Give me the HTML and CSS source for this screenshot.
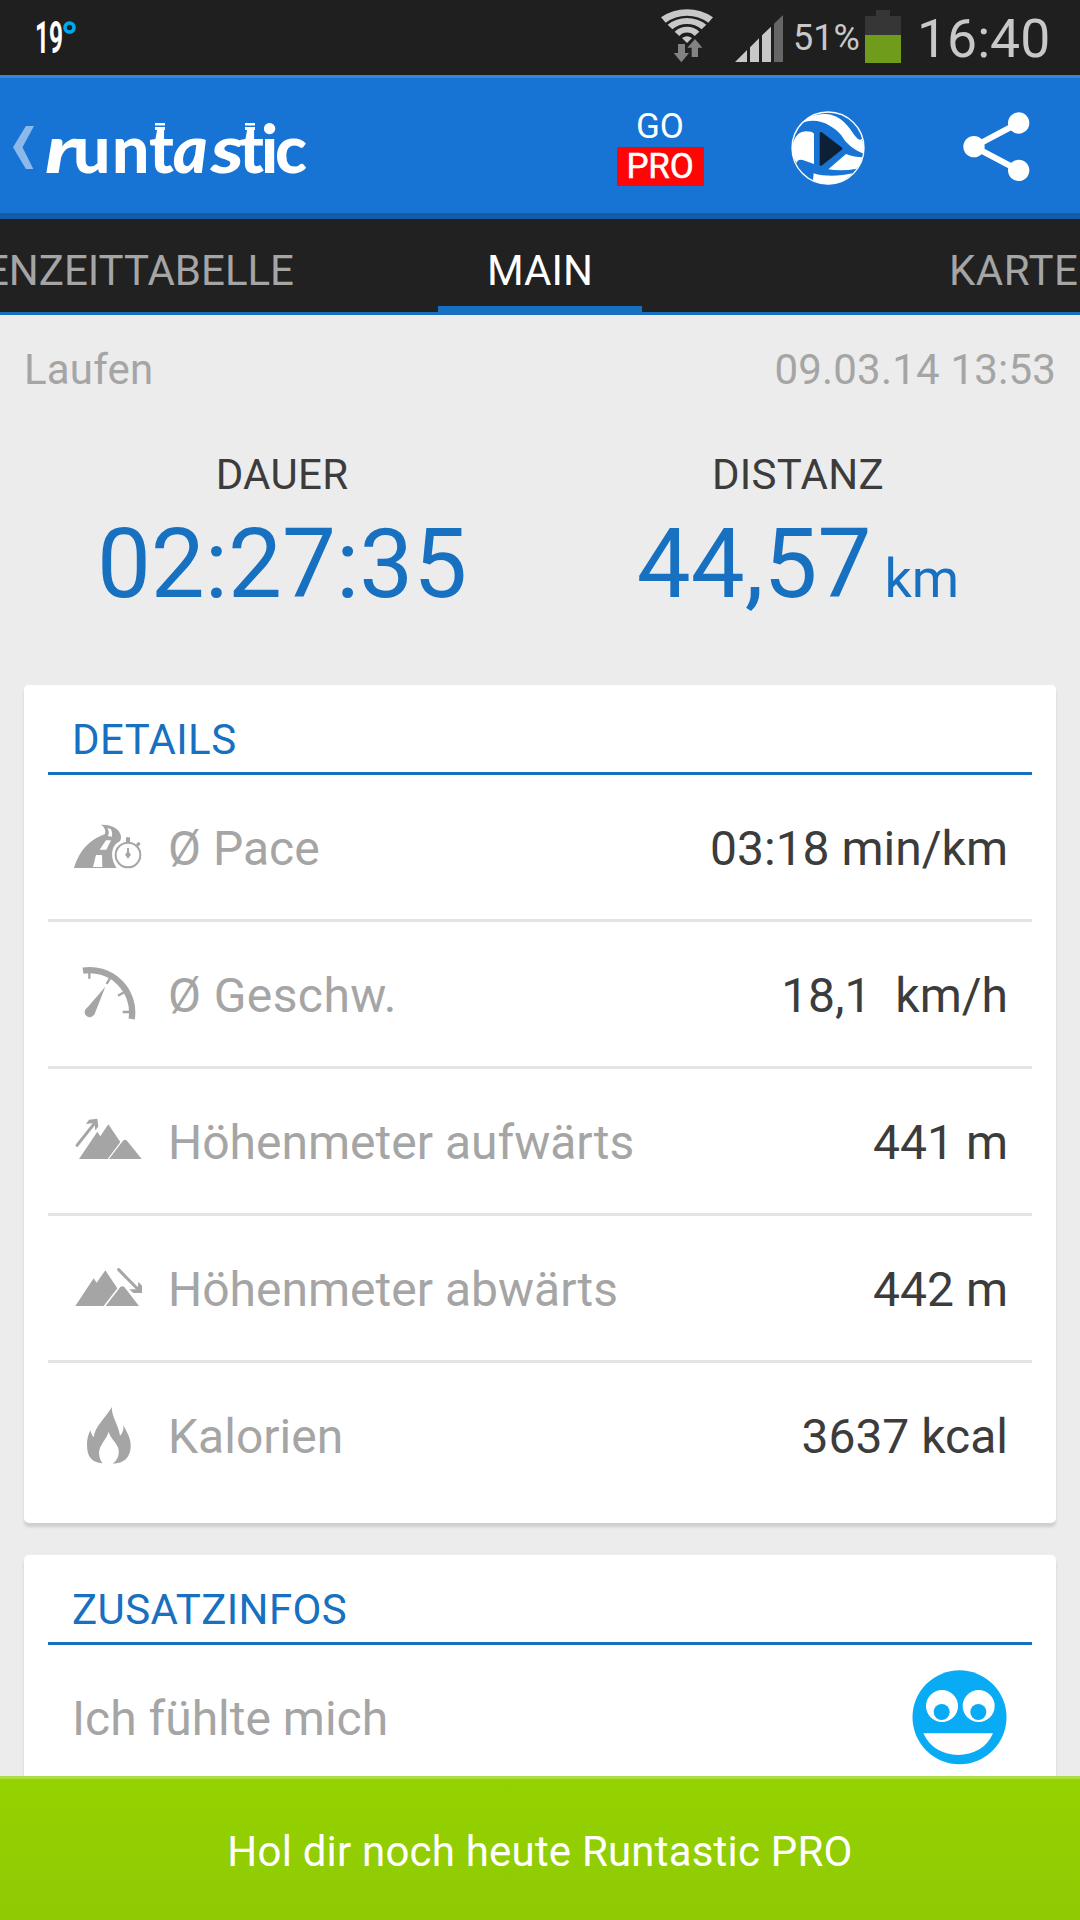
FILE: index.html
```html
<!DOCTYPE html>
<html lang="de">
<head>
  <title>runtastic</title>
  <meta charset="UTF-8">
  <link rel="stylesheet" href="styles.css">
</head>
<body>
  <div class="screen">

    <!-- Statusleiste -->
    <div class="status-bar">
      <svg class="temperature" viewBox="0 0 60 75">
        <text x="0" y="53" textLength="28" lengthAdjust="spacingAndGlyphs">19</text>
        <circle cx="34.5" cy="27.5" r="4.5"/>
      </svg>
      <div class="status-icons">
        <svg class="wifi" viewBox="183 27 156 162">
          <g fill="#c8c8c8">
            <path d="M183 52A139 139 0 0 1 339 52L325 68A108 108 0 0 0 197 68Z"/>
            <path d="M203 74A94 94 0 0 1 319 74L305 88A68 68 0 0 0 217 88Z"/>
            <path d="M224 95A53 53 0 0 1 298 95L284 108A31 31 0 0 0 238 108Z"/>
            <path d="M246 114Q261 103 276 114L261 129Z"/>
          </g>
          <g fill="#828282">
            <path d="M234 132H255V159H267L244 187L221 159H234Z"/>
            <path d="M275 171H294V143H307L285 117L262 143H275Z"/>
          </g>
        </svg>
        <svg class="signal" viewBox="405 45 144 144">
          <path fill="#c8c8c8" d="M405 186L441 150V186ZM450 186V142L477 115V186ZM486 186V106L513 80V186Z"/>
          <path fill="#666" d="M522 186V71L549 45V186Z"/>
        </svg>
        <span class="battery-text">51%</span>
        <svg class="battery" viewBox="0 0 36 53">
          <path fill="#363636" d="M11 0H25V6H36V25H0V6H11Z"/>
          <rect fill="#6f9c1a" y="25" width="36" height="28"/>
        </svg>
        <span class="clock">16:40</span>
      </div>
    </div>

    <!-- Kopfzeile -->
    <div class="action-bar">
      <svg class="back" viewBox="38 377 62 127">
        <path d="M76 377H100L66 440L98 504H76L38 440Z"/>
      </svg>
      <svg class="logo" viewBox="0 0 270 100">
        <text y="73"><tspan class="slanted" x="0" textLength="32" lengthAdjust="spacingAndGlyphs">r</tspan><tspan x="28 67 104">unt</tspan><tspan class="slanted" x="128">a</tspan><tspan class="slanted" x="166" textLength="33" lengthAdjust="spacingAndGlyphs">s</tspan><tspan x="194 216 230">tic</tspan></text>
        <path d="M110 23H120V25.500H110ZM110 27H120V30H110ZM200 23H210V25.500H200ZM200 27H210V30H200Z"/>
      </svg>
      <div class="actions">
        <div class="action go-pro">
          <span class="go">GO</span>
          <span class="pro">PRO</span>
        </div>
        <div class="action">
          <svg class="globe" viewBox="571 332 222 222">
            <circle cx="682" cy="443" r="108" fill="none" stroke="#fff" stroke-width="4"/>
            <g fill="#fff">
              <path d="M574 442C577 420 588 393 616 393Q634 393 640 400V491L606 479Q590 475 588 489Q574 468 574 442Z"/>
              <path d="M594 378C615 350 645 340 675 341C722 344 745 380 764 408Q776 424 784 415Q792 438 790 460C760 450 736 430 722 405C696 374 645 346 598 371Q588 385 583 407Z"/>
              <path d="M683 507L736 461Q762 471 785 471Q780 492 768 505Q725 513 683 507Z"/>
              <path d="M639 519C672 530 720 528 755 519Q725 552 682 552Q655 550 637 540Z"/>
            </g>
            <path d="M661 399L721 445L661 492Z" fill="#0e2036" stroke="#0e2036" stroke-width="8" stroke-linejoin="round"/>
          </svg>
        </div>
        <div class="action">
          <svg class="share" viewBox="1088 336 201 207">
            <path d="M1255 369L1121 440L1255 511" fill="none" stroke="#fff" stroke-width="18"/>
            <g fill="#fff">
              <circle cx="1121" cy="440" r="32"/>
              <circle cx="1255" cy="369" r="32"/>
              <circle cx="1255" cy="511" r="32"/>
            </g>
          </svg>
        </div>
      </div>
    </div>

    <!-- Tabs -->
    <div class="tabs">
      <div class="tab tab-prev">ENZEITTABELLE</div>
      <div class="tab tab-active">MAIN</div>
      <div class="tab tab-next">KARTE</div>
    </div>

    <div class="content">
      <div class="session">
        <span class="sport">Laufen</span>
        <span class="date">09.03.14 13:53</span>
      </div>

      <div class="summary">
        <div class="summary-item">
          <div class="summary-label">DAUER</div>
          <div class="summary-value">02:27:35</div>
        </div>
        <div class="summary-item">
          <div class="summary-label">DISTANZ</div>
          <div class="summary-value">44,57<span class="unit">km</span></div>
        </div>
      </div>

      <!-- Details -->
      <div class="card">
        <h2>DETAILS</h2>
        <div class="row">
          <svg class="icon" viewBox="156 423 216 216">
            <path d="M162 594C176 550 200 513 254 493C259 482 254 472 243 464C280 463 306 482 303 505L300 514C274 524 268 562 290 594Z"/>
            <path class="cut" d="M219 591L228 555H246L247 591ZM239 539L258 511H273L259 539ZM263 498Q271 488 262 474L272 477Q279 488 275 500Z"/>
            <circle class="line" cx="324" cy="555" r="37" stroke-width="6"/>
            <path d="M318 502H330V518H318ZM348 522L356 515L362 522L354 530ZM321 534H327V547L333 554L324 566L315 554L321 547Z"/>
          </svg>
          <span class="label">Ø Pace</span>
          <span class="value">03:18 min/km</span>
        </div>
        <div class="row">
          <svg class="icon" viewBox="156 864 216 216">
            <path class="line" stroke-width="19" d="M189 902A127 127 0 0 1 335 1047"/>
            <path class="line" stroke-width="7" d="M208 905V926M271 923L260 942M312 967L294 977M308 1026H332"/>
            <circle cx="209" cy="1027" r="15"/>
            <path d="M195 1021L256 950L223 1034Z"/>
          </svg>
          <span class="label speed">Ø Geschw.</span>
          <span class="value">18,1&nbsp; km/h</span>
        </div>
        <div class="row">
          <svg class="icon" viewBox="156 45 216 216">
            <path d="M177 207L232 125L241 139L265 103L301 156L263 207ZM267 207L309 152Q315 147 321 152L365 207Z"/>
            <path class="line round" stroke-width="9" d="M171 166L221 103"/>
            <path d="M198 102L207 89L232 86L235 110L226 121L223 99Z"/>
          </svg>
          <span class="label">Höhenmeter aufwärts</span>
          <span class="value">441 m</span>
        </div>
        <div class="row">
          <svg class="icon" viewBox="156 486 216 216">
            <path d="M166 648L221 565L230 578L256 541L292 595L251 648ZM257 648L301 591Q307 586 313 591L357 648Z"/>
            <path class="line round" stroke-width="9" d="M296 539L353 597"/>
            <path d="M355 575L366 587V609H340L328 598H353Z"/>
          </svg>
          <span class="label">Höhenmeter abwärts</span>
          <span class="value">442 m</span>
        </div>
        <div class="row">
          <svg class="icon" viewBox="156 927 216 216">
            <path d="M276 951C272 975 296 1005 300 1037C308 1030 312 1020 310 1006C322 1030 333 1045 332 1070C331 1102 312 1120 278 1121C292 1110 297 1100 296 1080C294 1060 272 1048 266 1025C260 1048 237 1065 237 1090C238 1105 242 1113 248 1120C215 1117 201 1100 201 1065C201 1045 205 1035 211 1020C213 1030 216 1035 221 1042C224 1010 255 985 276 951Z"/>
          </svg>
          <span class="label">Kalorien</span>
          <span class="value">3637 kcal</span>
        </div>
      </div>

      <!-- Zusatzinfos -->
      <div class="card">
        <h2>ZUSATZINFOS</h2>
        <div class="row">
          <span class="label">Ich fühlte mich</span>
          <svg class="smiley" viewBox="756 569 285 285">
            <circle cx="898.5" cy="711" r="141" fill="#09abf5"/>
            <circle cx="846" cy="677" r="48" fill="#fff"/>
            <circle cx="956" cy="677" r="48" fill="#fff"/>
            <circle cx="845" cy="695" r="24" fill="#09abf5"/>
            <circle cx="955" cy="695" r="24" fill="#09abf5"/>
            <path d="M790 759H999C981 802 940 824 894 824C850 824 809 802 790 759Z" fill="#fffdfc"/>
          </svg>
        </div>
      </div>
    </div>

    <div class="banner">Hol dir noch heute Runtastic PRO</div>
  </div>
</body>
</html>
```
FILE: styles.css
```css
body {
  margin: 0;
  font-family: Roboto, "Noto Sans", sans-serif;
  font-size: 48px;
  color: #3c3c3c;
}
svg { display: block; flex-shrink: 0; }

.screen {
  width: 1080px;
  height: 1920px;
  display: flex;
  flex-direction: column;
  overflow: hidden;
  background: #ececec;
}

/* Statusleiste */
.status-bar {
  height: 75px;
  flex-shrink: 0;
  display: flex;
  justify-content: space-between;
  background: #1f1f1f;
  color: #c8c8c8;
}
.temperature { width: 60px; height: 75px; margin-left: 35px; }
.temperature text { font-size: 44px; font-weight: 700; fill: #fff; }
.temperature circle { fill: none; stroke: #00a8f0; stroke-width: 3.6; }
.status-icons { display: flex; align-items: flex-start; padding-right: 31px; }
.wifi { width: 52px; height: 54px; margin-top: 9px; }
.signal { width: 48px; height: 48px; margin: 15px 0 0 22px; }
.battery-text { width: 72px; margin: 15px 0 0 10px; font-size: 36px; line-height: 46px; }
.battery { width: 36px; height: 53px; margin-top: 10px; }
.clock { width: 132px; margin: 6px 0 0 16px; font-size: 53.5px; line-height: 66px; white-space: nowrap; }

/* Kopfzeile */
.action-bar {
  height: 144px;
  flex-shrink: 0;
  box-sizing: border-box;
  display: flex;
  align-items: flex-start;
  border-top: 3px solid #3785d9;
  border-bottom: 6px solid #125ca8;
  background: #1774d4;
}
.back { width: 21px; height: 43px; margin: 48px 0 0 13px; fill: #8cb9e9; }
.logo { width: 270px; height: 100px; margin: 22px 0 0 11px; fill: #fff; }
.logo text { font-family: Lato, sans-serif; font-size: 66px; font-weight: 900; }
.logo .slanted { font-style: italic; }
.actions { display: flex; margin-left: auto; }
.action { width: 168px; height: 135px; display: flex; flex-direction: column; align-items: center; }
.go-pro { color: #fff; font-size: 35px; }
.go { margin-top: 29px; line-height: 40px; }
.pro { width: 87px; height: 39px; line-height: 39px; text-align: center; letter-spacing: -0.2px; background: #ff0505; -webkit-text-stroke: 0.5px #fff; }
.globe { width: 74px; height: 74px; margin-top: 33px; }
.share { width: 67px; height: 69px; margin-top: 34px; }

/* Tabs */
.tabs {
  height: 96px;
  flex-shrink: 0;
  box-sizing: border-box;
  display: grid;
  grid-template-columns: 438px 204px 438px;
  grid-template-rows: 93px;
  border-bottom: 3px solid #1770c0;
  background: #212121;
}
.tab { display: flex; font-size: 42px; line-height: 104px; color: #a5a5a5; overflow: hidden; }
.tab-prev { width: 294px; justify-content: flex-end; }
.tab-active { justify-content: center; box-sizing: border-box; border-bottom: 6px solid #1770c0; color: #fff; }
.tab-next { padding-left: 307px; letter-spacing: 0.5px; }

.content { height: 1461px; flex-shrink: 0; padding: 0 24px; overflow: hidden; }
.session { display: flex; justify-content: space-between; padding-top: 30px; font-size: 42px; line-height: 50px; color: #a5a5a5; }
.sport, .date { letter-spacing: 0.2px; }
.summary { display: flex; height: 290px; }
.summary-item { flex: 1; text-align: center; }
.summary-label { margin-top: 55px; font-size: 42px; line-height: 50px; letter-spacing: 0.3px; }
.summary-value { margin-top: 8px; font-size: 96px; line-height: 112px; color: #1770c0; }
.unit { margin-left: 13px; font-size: 54px; }

/* Karten */
.card {
  box-sizing: border-box;
  padding: 0 24px 16px;
  margin-bottom: 32px;
  border-radius: 5px;
  background: #fff;
  box-shadow: 0 4px 3px rgba(0, 0, 0, 0.13);
}
.card h2 {
  margin: 0;
  padding: 30px 24px 7px;
  border-bottom: 3px solid #1770c0;
  font-size: 42px;
  font-weight: 400;
  line-height: 50px;
  letter-spacing: 0.4px;
  color: #1770c0;
}
.row { display: flex; align-items: center; height: 144px; padding: 0 24px; border-bottom: 3px solid #e4e4e4; }
.row:last-child { border-bottom: none; }
.icon { width: 72px; height: 72px; margin-right: 24px; fill: #a5a5a5; }
.icon .cut { fill: #fff; }
.icon .line { fill: none; stroke: #a5a5a5; }
.icon .round { stroke-linecap: round; }
.label { padding-top: 2px; color: #a5a5a5; }
.speed { letter-spacing: 0.4px; }
.value { margin-left: auto; padding-top: 2px; }
.smiley { width: 95px; height: 95px; margin: 0 1px 0 auto; }

.banner {
  height: 144px;
  box-sizing: border-box;
  border-top: 3px solid #aedd44;
  background: linear-gradient(#94d200, #8fca04);
  font-size: 42px;
  line-height: 145px;
  letter-spacing: 0.2px;
  text-align: center;
  color: #fff;
}
```
